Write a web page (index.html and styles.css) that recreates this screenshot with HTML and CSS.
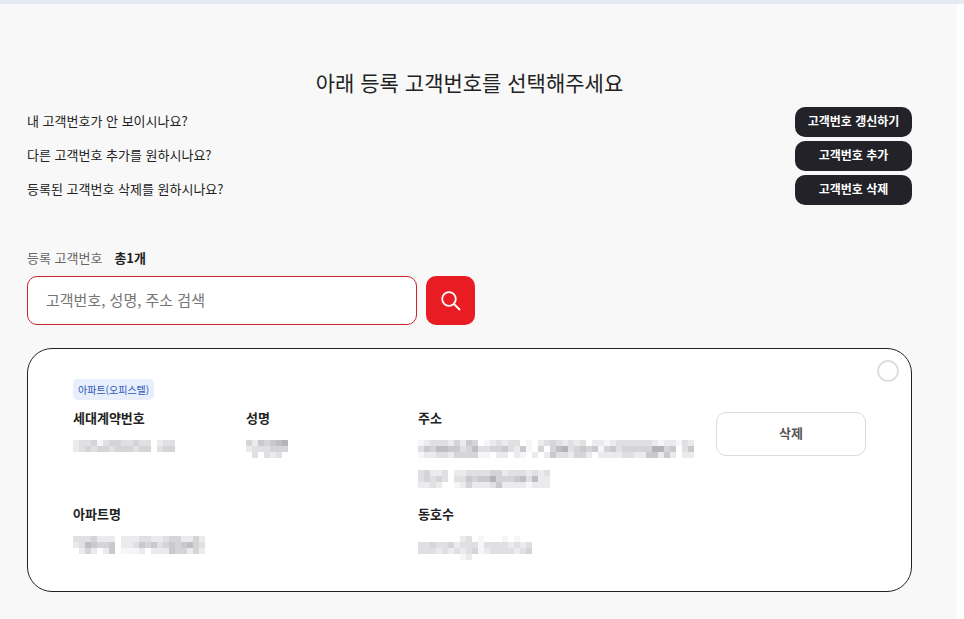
FILE: index.html
```html
<!DOCTYPE html>
<html lang="ko">
<head>
<meta charset="utf-8">
<meta name="viewport" content="width=device-width, initial-scale=1">
<title>고객번호 선택</title>
<link rel="stylesheet" href="styles.css">
</head>
<body>
<main class="page">
  <h1 class="title">아래 등록 고객번호를 선택해주세요</h1>

  <ul class="guide">
    <li class="guide-row"><span>내 고객번호가 안 보이시나요?</span><button type="button" class="btn-dark">고객번호 갱신하기</button></li>
    <li class="guide-row"><span>다른 고객번호 추가를 원하시나요?</span><button type="button" class="btn-dark">고객번호 추가</button></li>
    <li class="guide-row"><span>등록된 고객번호 삭제를 원하시나요?</span><button type="button" class="btn-dark">고객번호 삭제</button></li>
  </ul>

  <form class="search">
    <div class="search-head"><label for="keyword">등록 고객번호</label><strong>총1개</strong></div>
    <div class="search-row">
      <input id="keyword" class="search-input" type="text" placeholder="고객번호, 성명, 주소 검색">
      <button type="button" class="search-btn" aria-label="검색">
        <svg width="22" height="22" viewBox="0 0 22 22" fill="none" stroke="#fff" stroke-width="1.8" aria-hidden="true"><circle cx="9" cy="9" r="6.8"/><path d="M14 14L20 20"/></svg>
      </button>
    </div>
  </form>

  <section class="card">
    <input class="pick" type="radio" name="customer" aria-label="고객번호 선택">
    <span class="tag">아파트(오피스텔)</span>
    <div class="card-body">
      <dl class="info">
        <div class="field"><dt>세대계약번호</dt><dd><svg class="mosaic" data-rows="eddcfdccddcdd0edd/edcdccdcccdcc0dcc"></svg></dd></div>
        <div class="field"><dt>성명</dt><dd><svg class="mosaic" data-rows="cebcba9/edddccc/0d0ded0"></svg></dd></div>
        <div class="field"><dt>주소</dt><dd>
          <svg class="mosaic" data-rows="fedddecebc0fededd0f0edcdeded0eefeddddddefeefde/dbcaabbdcaddccbdebf0c0ca9dcbcbfcbdccccc99cb0dbdb/feeddeccccff0ee0ef0e0ebddecce0eeeeddeebbebe0eeed"></svg>
          <svg class="mosaic" data-rows="dceed0eeddddccedddeded/dcdcd0ddbcbb9cccbadaee/eede00feceeedbeeeefeee"></svg></dd></div>
        <div class="field field-name"><dt>아파트명</dt><dd><svg class="mosaic" data-rows="dddceee0eeeddeedcceece/edabccb0eedbcbdcbcbacd/0ece0eb0fffe0eeebccece"></svg></dd></div>
        <div class="field"><dt>동호수</dt><dd><svg class="mosaic" data-rows="0000000ed0f000f0f00/ddcddcedddfddddeded/dddedededcfeddddedc/0000000fe"></svg></dd></div>
      </dl>
      <button type="button" class="btn-line">삭제</button>
    </div>
  </section>
</main>
<script src="mosaic.js"></script>
</body>
</html>
```
FILE: mosaic.js
```js
// Draws masked values: each hex digit is the grey level of one cell, 0 is empty.
const CELL = 6;
document.querySelectorAll('.mosaic').forEach(function (svg) {
  const rows = svg.dataset.rows.split('/');
  svg.setAttribute('width', CELL * Math.min(46, Math.max(...rows.map(r => r.length))));
  svg.setAttribute('height', CELL * rows.length);
  svg.setAttribute('aria-hidden', 'true');
  rows.forEach(function (row, y) {
    [...row].forEach(function (level, x) {
      if (level === '0') return;
      const rect = document.createElementNS('http://www.w3.org/2000/svg', 'rect');
      rect.setAttribute('x', x * CELL);
      rect.setAttribute('y', y * CELL);
      rect.setAttribute('width', CELL);
      rect.setAttribute('height', CELL);
      const v = 246 - (15 - parseInt(level, 16)) * 11;
      rect.setAttribute('fill', 'rgb(' + v + ',' + v + ',' + (v + 2) + ')');
      svg.appendChild(rect);
    });
  });
});
```
FILE: styles.css
```css
* { box-sizing: border-box; }

body {
  margin: 0;
  border-top: 4px solid #e6eaf2;
  background: #fff;
  color: #222;
  font: 13px/20px "Noto Sans CJK KR", sans-serif;
}

button, input { font: inherit; }

.page {
  min-height: calc(100vh - 4px);
  margin-right: 7px;
  padding: 62px 45px 27px 27px;
  background: #f8f8f8;
}

.title {
  margin: 0;
  font-size: 21px;
  line-height: 32px;
  font-weight: 400;
  text-align: center;
}

.guide {
  display: flex;
  flex-direction: column;
  gap: 4px;
  margin: 9px 0 0;
  padding: 0;
  list-style: none;
}

.guide-row {
  display: flex;
  justify-content: space-between;
  line-height: 28px;
}

.btn-dark {
  width: 117px;
  height: 30px;
  padding: 0 0 2px;
  border: 0;
  border-radius: 10px;
  background: #222228;
  color: #fff;
  font-size: 12px;
  font-weight: 700;
}

.search { margin-top: 43px; }

.search-head {
  display: flex;
  gap: 12px;
  color: #666;
}

.search-head strong { color: #222; }

.search-row {
  display: flex;
  gap: 9px;
  margin-top: 8px;
}

.search-input {
  width: 390px;
  height: 49px;
  padding: 0 18px 2px;
  border: 1px solid #c9252f;
  border-radius: 10px;
  background: #fff;
  font-size: 15px;
}

.search-input::placeholder { color: #757575; }

.search-btn {
  display: grid;
  place-items: center;
  width: 49px;
  height: 49px;
  padding: 0;
  border: 0;
  border-radius: 10px;
  background: #e91c23;
}

.card {
  position: relative;
  margin-top: 23px;
  padding: 30px 45px 31px;
  border: 1px solid #222;
  border-radius: 25px;
  background: #fff;
}

.pick {
  position: absolute;
  top: 11px;
  right: 12px;
  width: 22px;
  height: 22px;
  margin: 0;
  appearance: none;
  border: 2px solid #dedee3;
  border-radius: 50%;
}

.tag {
  display: block;
  width: fit-content;
  padding: 0 5px;
  border-radius: 5px;
  background: #e8eefc;
  color: #2858b8;
  font-size: 10px;
  line-height: 21px;
}

.card-body {
  display: flex;
  align-items: flex-start;
  gap: 20px;
  margin-top: 8px;
}

.info {
  flex: 1;
  display: grid;
  grid-template-columns: 173px 172px 1fr;
  row-gap: 16px;
  margin: 0;
}

.field-name { grid-column: span 2; }

.field dt { font-weight: 700; }

.field dd {
  display: flex;
  flex-direction: column;
  gap: 12px;
  margin: 12px 0 0;
}

.mosaic { display: block; }

.btn-line {
  flex: none;
  width: 150px;
  height: 44px;
  margin-top: 4px;
  padding: 0 0 2px;
  border: 1px solid #dcdce0;
  border-radius: 10px;
  background: #fff;
  color: #555;
  font-weight: 700;
}
```
